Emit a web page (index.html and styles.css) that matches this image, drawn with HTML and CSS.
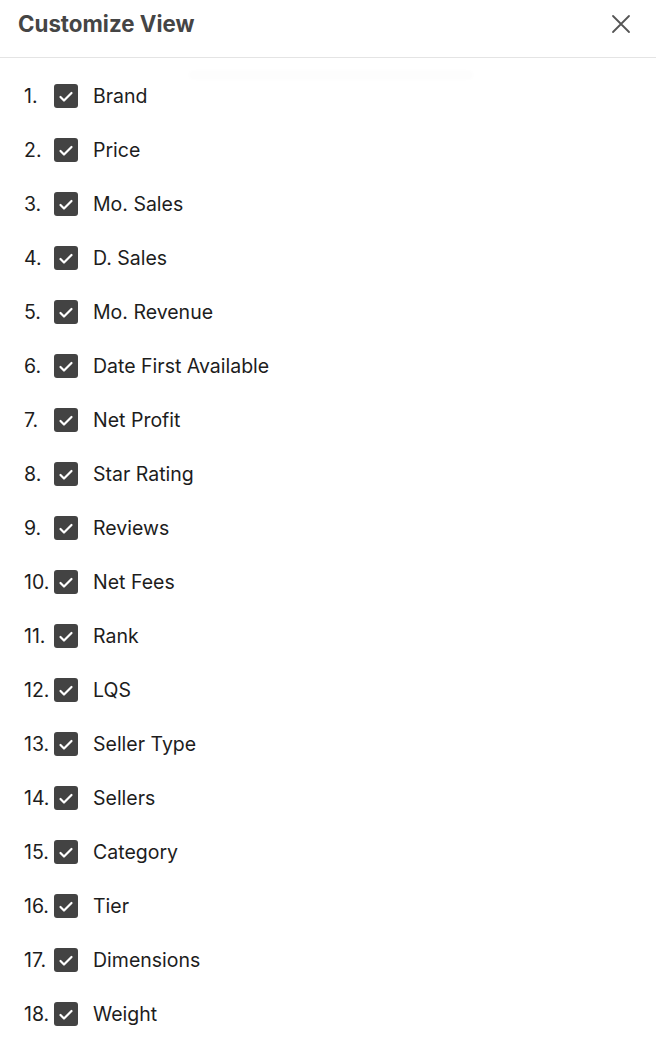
FILE: index.html
```html
<!DOCTYPE html>
<html lang="en">
<head>
<meta charset="utf-8">
<title>Customize View</title>
<link rel="stylesheet" href="styles.css">
</head>
<body>
<div class="panel">
  <header class="header">
    <h1 class="title">Customize View</h1>
    <button class="close" aria-label="Close">
      <svg width="24" height="24" viewBox="0 0 24 24" fill="none" stroke="#555" stroke-width="1.8" stroke-linecap="round"><path d="M4 4L20 20M20 4L4 20"/></svg>
    </button>
  </header>
  <div class="list">
    <div class="ghost"></div>
    <div class="row"><span class="num">1.</span><span class="box"><svg viewBox="0 0 24 24"><path d="M6.5 13L10 16.5L17.5 9"/></svg></span><span class="label">Brand</span></div>
    <div class="row"><span class="num">2.</span><span class="box"><svg viewBox="0 0 24 24"><path d="M6.5 13L10 16.5L17.5 9"/></svg></span><span class="label">Price</span></div>
    <div class="row"><span class="num">3.</span><span class="box"><svg viewBox="0 0 24 24"><path d="M6.5 13L10 16.5L17.5 9"/></svg></span><span class="label">Mo. Sales</span></div>
    <div class="row"><span class="num">4.</span><span class="box"><svg viewBox="0 0 24 24"><path d="M6.5 13L10 16.5L17.5 9"/></svg></span><span class="label">D. Sales</span></div>
    <div class="row"><span class="num">5.</span><span class="box"><svg viewBox="0 0 24 24"><path d="M6.5 13L10 16.5L17.5 9"/></svg></span><span class="label">Mo. Revenue</span></div>
    <div class="row"><span class="num">6.</span><span class="box"><svg viewBox="0 0 24 24"><path d="M6.5 13L10 16.5L17.5 9"/></svg></span><span class="label">Date First Available</span></div>
    <div class="row"><span class="num">7.</span><span class="box"><svg viewBox="0 0 24 24"><path d="M6.5 13L10 16.5L17.5 9"/></svg></span><span class="label">Net Profit</span></div>
    <div class="row"><span class="num">8.</span><span class="box"><svg viewBox="0 0 24 24"><path d="M6.5 13L10 16.5L17.5 9"/></svg></span><span class="label">Star Rating</span></div>
    <div class="row"><span class="num">9.</span><span class="box"><svg viewBox="0 0 24 24"><path d="M6.5 13L10 16.5L17.5 9"/></svg></span><span class="label">Reviews</span></div>
    <div class="row"><span class="num">10.</span><span class="box"><svg viewBox="0 0 24 24"><path d="M6.5 13L10 16.5L17.5 9"/></svg></span><span class="label">Net Fees</span></div>
    <div class="row"><span class="num">11.</span><span class="box"><svg viewBox="0 0 24 24"><path d="M6.5 13L10 16.5L17.5 9"/></svg></span><span class="label">Rank</span></div>
    <div class="row"><span class="num">12.</span><span class="box"><svg viewBox="0 0 24 24"><path d="M6.5 13L10 16.5L17.5 9"/></svg></span><span class="label">LQS</span></div>
    <div class="row"><span class="num">13.</span><span class="box"><svg viewBox="0 0 24 24"><path d="M6.5 13L10 16.5L17.5 9"/></svg></span><span class="label">Seller Type</span></div>
    <div class="row"><span class="num">14.</span><span class="box"><svg viewBox="0 0 24 24"><path d="M6.5 13L10 16.5L17.5 9"/></svg></span><span class="label">Sellers</span></div>
    <div class="row"><span class="num">15.</span><span class="box"><svg viewBox="0 0 24 24"><path d="M6.5 13L10 16.5L17.5 9"/></svg></span><span class="label">Category</span></div>
    <div class="row"><span class="num">16.</span><span class="box"><svg viewBox="0 0 24 24"><path d="M6.5 13L10 16.5L17.5 9"/></svg></span><span class="label">Tier</span></div>
    <div class="row"><span class="num">17.</span><span class="box"><svg viewBox="0 0 24 24"><path d="M6.5 13L10 16.5L17.5 9"/></svg></span><span class="label">Dimensions</span></div>
    <div class="row"><span class="num">18.</span><span class="box"><svg viewBox="0 0 24 24"><path d="M6.5 13L10 16.5L17.5 9"/></svg></span><span class="label">Weight</span></div>
  </div>
</div>
</body>
</html>
```
FILE: styles.css
```css
html, body {
  margin: 0;
  padding: 0;
  background: #fff;
}
body {
  font-family: Inter, "Noto Sans", "Liberation Sans", sans-serif;
  color: #1d1d1d;
}
.panel {
  width: 656px;
}
.header {
  box-sizing: border-box;
  height: 58px;
  padding: 10px 23px 0 18px;
  display: flex;
  justify-content: space-between;
  align-items: flex-start;
  border-bottom: 1px solid #e4e4e4;
}
.title {
  margin: 0;
  font-size: 22.3px;
  line-height: 28px;
  font-weight: 700;
  color: #454545;
}
.close {
  border: 0;
  background: none;
  padding: 0;
  margin-top: 1.5px;
  width: 24px;
  height: 24px;
  display: flex;
}
.list {
  position: relative;
  padding-top: 11px;
}
.ghost {
  position: absolute;
  left: 190px;
  top: 14px;
  width: 282px;
  height: 6px;
  border-radius: 3px;
  background: #fdfdfd;
  box-shadow: 0 0 4px 1px #fcfcfc;
}
.row {
  height: 54px;
  display: flex;
  align-items: center;
  padding-left: 24px;
  font-size: 19.5px;
  line-height: 24px;
}
.num {
  width: 30px;
  flex: none;
}
.box {
  width: 24px;
  height: 24px;
  border-radius: 3px;
  background: #434343;
  flex: none;
  display: flex;
}
.box svg {
  width: 24px;
  height: 24px;
  fill: none;
  stroke: #fff;
  stroke-width: 2.2;
  stroke-linecap: round;
  stroke-linejoin: round;
}
.label {
  margin-left: 15px;
}
```
